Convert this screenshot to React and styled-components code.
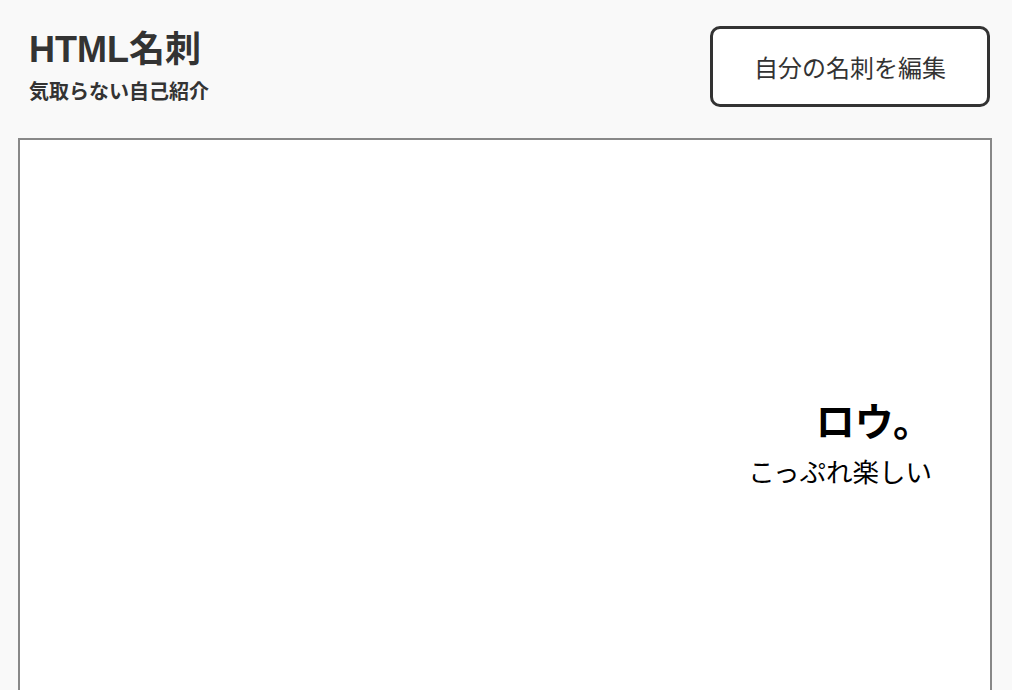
import React from "react";
import styled, { createGlobalStyle } from "styled-components";

const GlobalStyle = createGlobalStyle`
  html, body {
    margin: 0;
    padding: 0;
    background: #f9f9f9;
    font-family: "Liberation Sans", "Noto Sans CJK JP", sans-serif;
    color: #333;
  }
`;

const Page = styled.div`
  min-height: 690px;
  overflow: hidden;
`;

const Header = styled.header`
  display: flex;
  justify-content: space-between;
  align-items: flex-start;
  padding: 26px 22px 0 29px;
`;

const TitleBlock = styled.div`
  display: flex;
  flex-direction: column;
  padding-top: 6px;
`;

const Title = styled.h1`
  margin: 0;
  font-size: 36px;
  line-height: 1;
  font-weight: 700;
`;

const Tagline = styled.p`
  margin: 13px 0 0;
  font-family: "Noto Sans CJK JP", sans-serif;
  font-size: 20px;
  line-height: 1;
  font-weight: 700;
`;

const EditButton = styled.button`
  width: 280px;
  height: 81px;
  box-sizing: border-box;
  background: #fff;
  border: 3px solid #333;
  border-radius: 10px;
  color: #333;
  font-family: "Noto Sans CJK JP", sans-serif;
  font-size: 24px;
  line-height: 1;
  font-weight: 400;
  cursor: pointer;
`;

const Card = styled.section`
  margin: 31px 20px 0 18px;
  height: 588px;
  box-sizing: border-box;
  background: #fff;
  border: 2px solid #888;
  display: flex;
  flex-direction: column;
  align-items: flex-end;
  padding: 260px 58px 0 0;
  color: #000;
  font-family: "Noto Sans CJK JP", sans-serif;
`;

const Name = styled.h2`
  margin: 0;
  font-size: 39px;
  line-height: 1;
  font-weight: 700;
`;

const Motto = styled.p`
  margin: 19px 0 0;
  font-size: 26.5px;
  line-height: 1;
  font-weight: 400;
`;

export default function App() {
  return (
    <Page>
      <GlobalStyle />
      <Header>
        <TitleBlock>
          <Title>HTML名刺</Title>
          <Tagline>気取らない自己紹介</Tagline>
        </TitleBlock>
        <EditButton>自分の名刺を編集</EditButton>
      </Header>
      <Card>
        <Name>ロウ。</Name>
        <Motto>こっぷれ楽しい</Motto>
      </Card>
    </Page>
  );
}
